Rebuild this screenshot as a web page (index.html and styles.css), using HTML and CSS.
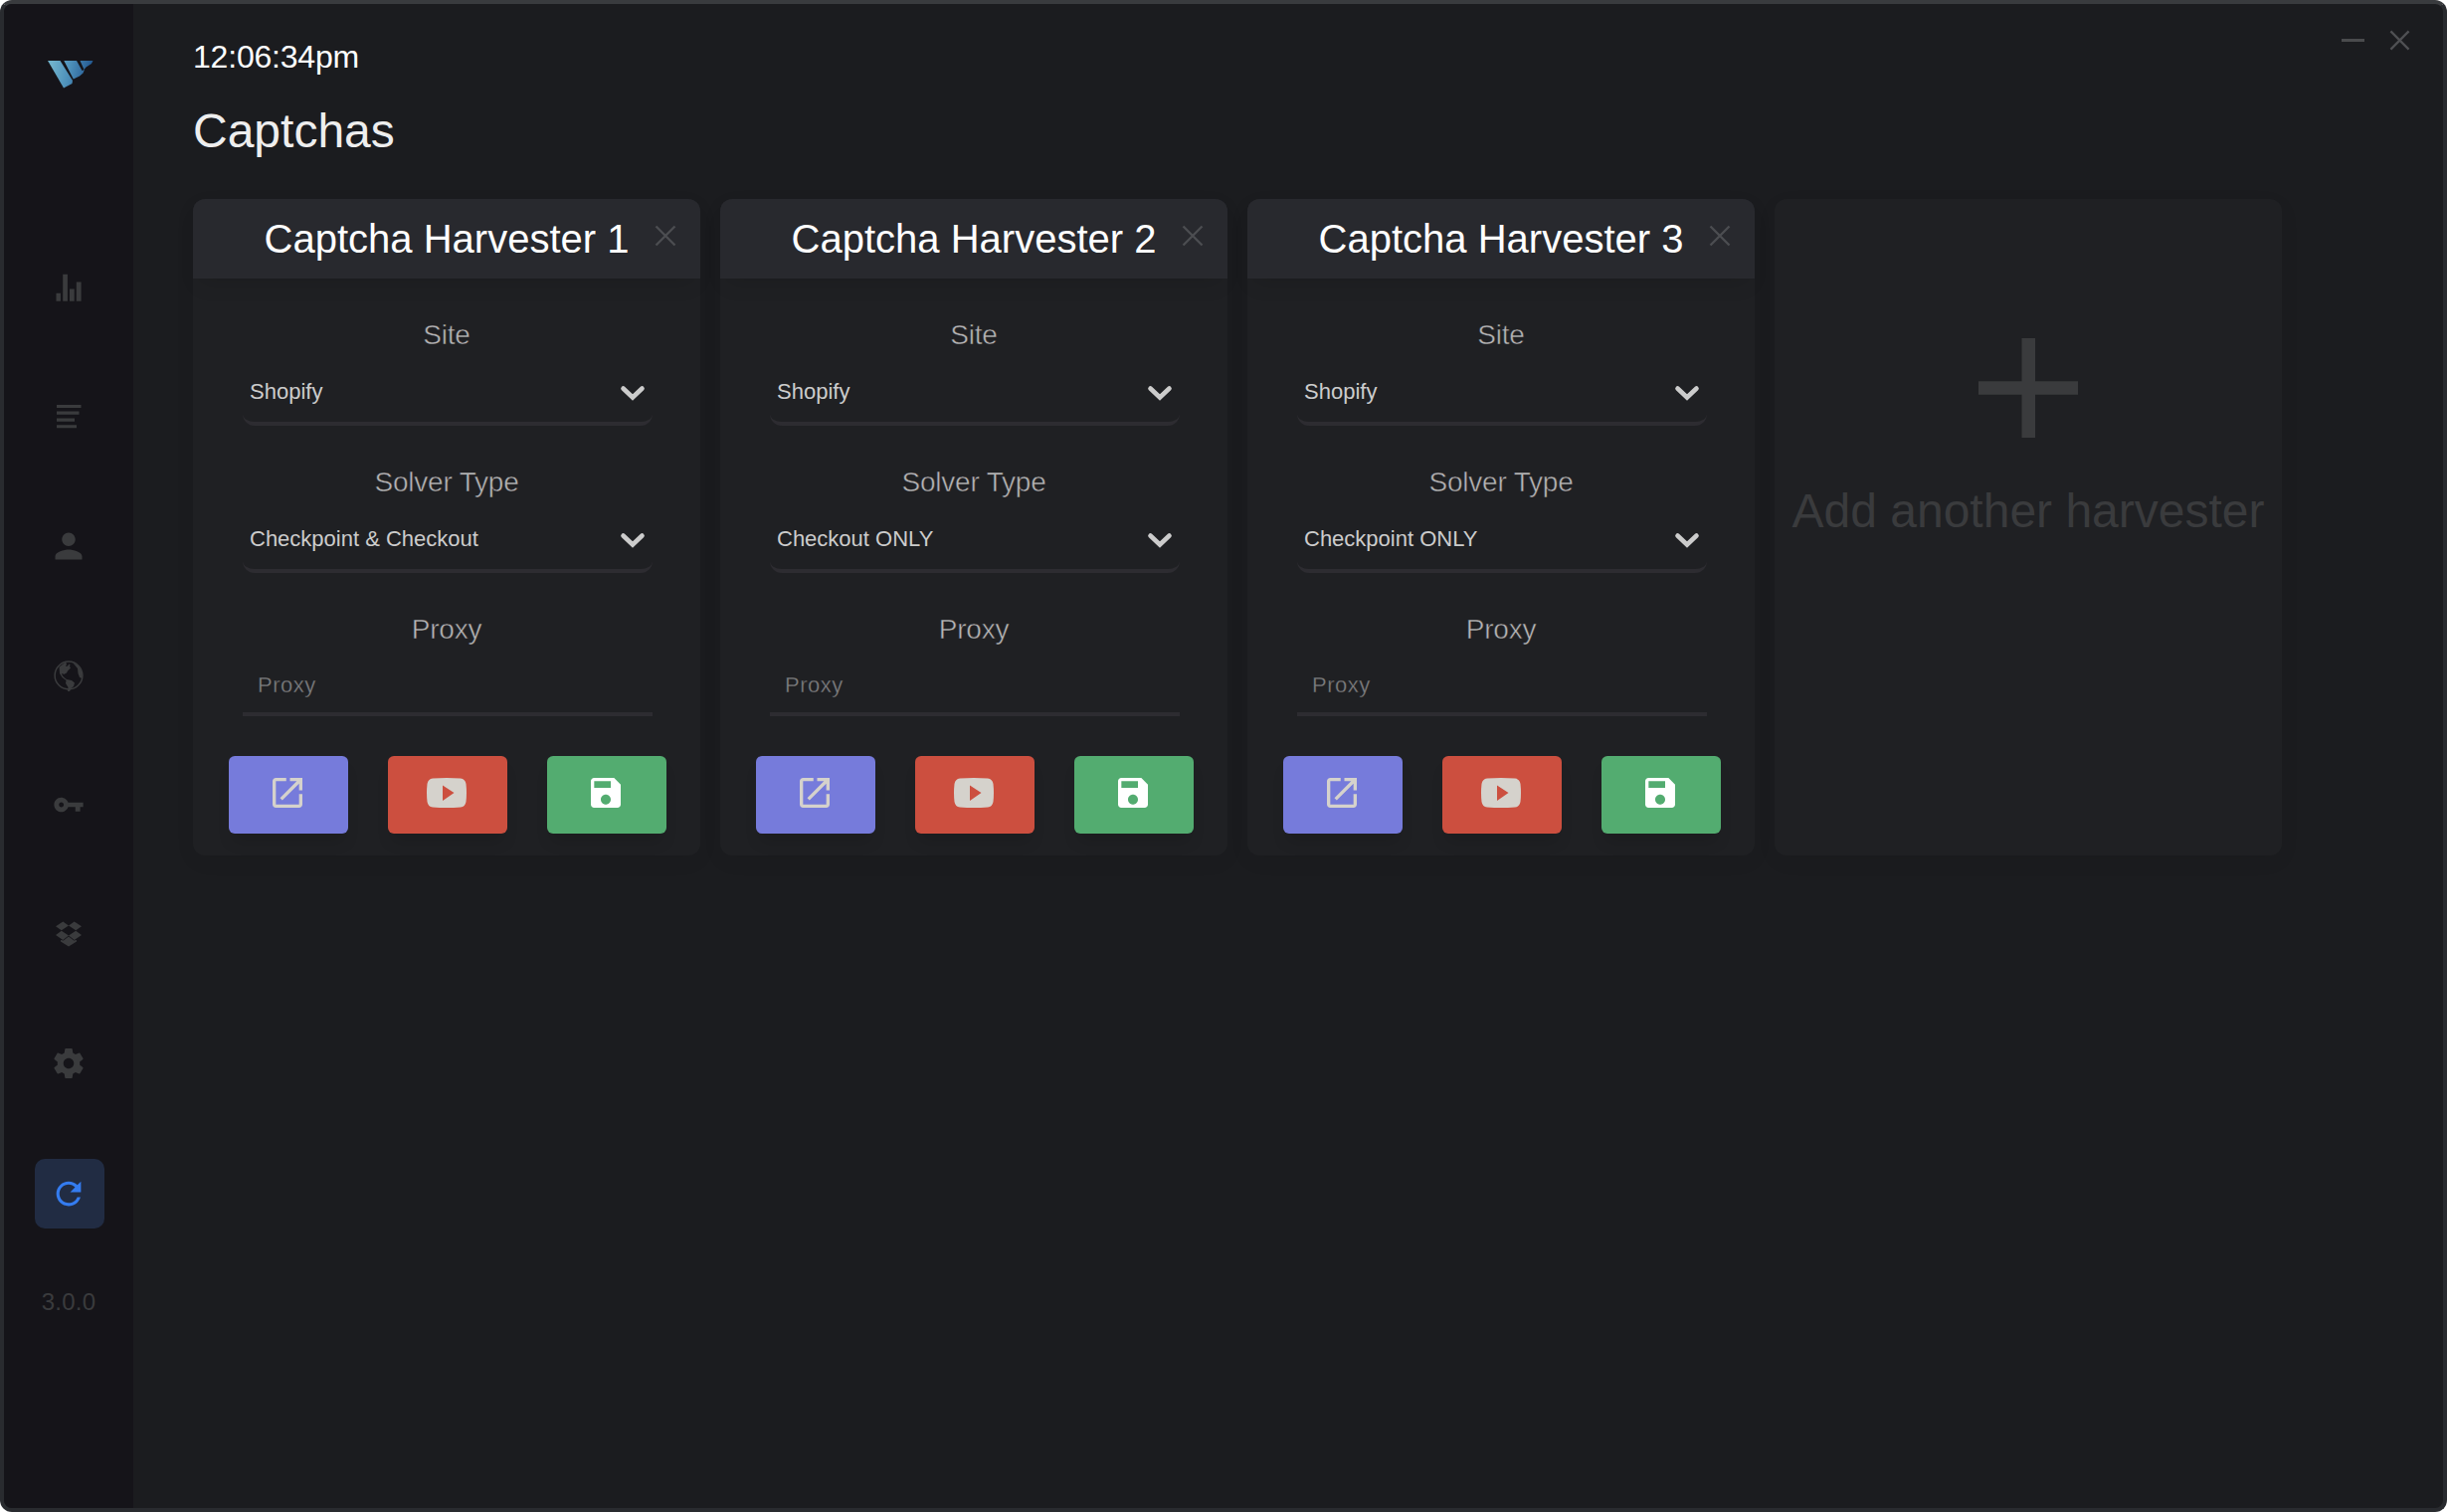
FILE: index.html
```html
<!DOCTYPE html>
<html lang="en">
<head>
<meta charset="utf-8">
<title>Captchas</title>
<link rel="stylesheet" href="styles.css">
</head>
<body>
<svg class="defs" aria-hidden="true">
  <symbol id="i-x" viewBox="0 0 22 22"><path d="M1.5 1.5l19 19M20.5 1.5l-19 19" fill="none" stroke="currentColor" stroke-width="2.4"/></symbol>
  <symbol id="i-chevron" viewBox="0 0 26 16"><path d="M3.5 3.5L13 12.5l9.500-9" fill="none" stroke="currentColor" stroke-width="4.600" stroke-linecap="round"/></symbol>
  <symbol id="i-open" viewBox="0 0 512 512"><path fill="currentColor" d="M405.340 405.332H106.660V106.668H240V64H106.660C83.191 64 64 83.197 64 106.668v298.664C64 428.803 83.191 448 106.660 448h298.680c23.469 0 42.660-19.197 42.660-42.668V272h-42.660v133.332zM288 64v42.668h87.474L159.999 322.133l29.866 29.866 215.476-215.470V224H448V64H288z"/></symbol>
  <symbol id="i-youtube" viewBox="0 0 40 30"><path fill="currentColor" fill-rule="evenodd" d="M6 .5Q20-.5 34 .5Q38.600 1 39.500 6Q40.500 15 39.500 24Q38.600 29 34 29.500Q20 30.500 6 29.500Q1.400 29 .5 24Q-.5 15 .5 6Q1.400 1 6 .5zM16 7.500v15.500L27.500 15z"/></symbol>
  <symbol id="i-save" viewBox="0 0 512 512"><path fill="currentColor" fill-rule="evenodd" d="M362.700 64h-256C83 64 64 83.200 64 106.700v298.700c0 23.500 19 42.700 42.700 42.700h298.700c23.500 0 42.700-19.200 42.700-42.700v-256L362.700 64zM256 405.300c-35.400 0-64-28.600-64-64s28.600-64 64-64 64 28.600 64 64-28.600 64-64 64zM320 192H106.700v-85.300H320V192z"/></symbol>
</svg>
<div class="window">
  <nav class="sidebar">
    <svg class="logo" viewBox="0 0 46 28">
      <defs><linearGradient id="g" x1="4" y1="4" x2="44" y2="12" gradientUnits="userSpaceOnUse"><stop offset="0" stop-color="#70b2cb"/><stop offset=".45" stop-color="#4d90ba"/><stop offset="1" stop-color="#22568f"/></linearGradient></defs>
      <path fill="url(#g)" d="M0 0H12.500L25 20 24.500 23 16 27.500z"/>
      <path fill="url(#g)" d="M16.300 0H29L34.500 10 37 9 35.500 12.500 32 15.500 25.800 18.500z"/>
      <path fill="url(#g)" d="M32.500 0H45.500L44 3 38.500 6.500 36.500 9z"/>
    </svg>
    <svg class="nav" viewBox="0 0 36 36"><path d="M5.500 23.700h4.400v8H5.500zM12.200 4.700h4.700v27h-4.700zM19 19.500h4.700v12.200H19zM25.800 12.500h4.800v19.200h-4.800z"/></svg>
    <svg class="nav" viewBox="0 0 36 36"><path d="M6 6h24.500v3H6zM6 12.600h22.500v3.200H6zM6 19.500h18v3.200H6zM6 26.300h20v3H6z"/></svg>
    <svg class="nav" viewBox="0 0 512 512"><path d="M256 256c52.805 0 96-43.201 96-96s-43.195-96-96-96-96 43.201-96 96 43.195 96 96 96zm0 48c-63.598 0-192 32.402-192 96v48h384v-48c0-63.598-128.402-96-192-96z"/></svg>
    <svg class="nav" viewBox="0 0 36 36"><circle cx="18" cy="18" r="13.900" fill="none" stroke="currentColor" stroke-width="1.500"/><path d="M8.500 9.500L15 4.500l1 2-1 2.500 2-.5 1.500-2 1 .5-.5 2 1 1.500-3 3-1 2-3 1.500-1-1-1 .5 1 2 2 2 2 1.500 5 1 3 2.500-1 3.500-2.500 2-1.500 3h-2l.5-4-2.500-4 .5-3-4-3-2.500-4zM22 5l6 3.500 3.500 6V21l-2.500-1-1.500-4-.5-5z"/></svg>
    <svg class="nav" viewBox="0 0 512 512"><path d="M249.200 224c-14.200-40.200-55.100-72-100.200-72-57.200 0-101 46.800-101 104s45.800 104 103 104c45.100 0 84.100-31.800 98.200-72H352v64h69.100v-64H464v-64H249.200zm-97.600 66.500c-19 0-34.500-15.500-34.500-34.500s15.500-34.500 34.500-34.500 34.500 15.500 34.500 34.500-15.500 34.500-34.500 34.500z"/></svg>
    <svg class="nav" viewBox="0 0 36 36"><path d="M12.300 5.500L18 9.500 10.800 14.300 5 10.300zM23.700 5.500L31 10.300 25.200 14.300 18 9.500zM10.800 14.700L18 19.600 12.300 24 5 19zM25.200 14.700L31 19 23.700 24 18 19.600zM18 20.600l5.200 4L26 24V25.500L18 30.500 10 25.500V24L12.800 24.600z"/></svg>
    <svg class="nav" viewBox="0 0 24 24"><path d="M19.430 12.980c.04-.32.070-.64.070-.98s-.03-.66-.07-.98l2.110-1.650c.19-.15.240-.42.120-.64l-2-3.460c-.12-.22-.39-.3-.61-.22l-2.490 1c-.52-.4-1.080-.73-1.690-.98l-.38-2.650C14.460 2.180 14.250 2 14 2h-4c-.25 0-.46.180-.49.420l-.38 2.650c-.61.250-1.170.59-1.690.98l-2.490-1c-.23-.09-.49 0-.61.220l-2 3.460c-.13.220-.07.490.12.640l2.110 1.650c-.04.320-.07.650-.07.980s.03.660.070.980l-2.110 1.650c-.19.150-.24.420-.12.640l2 3.460c.12.220.39.300.61.220l2.490-1c.52.400 1.080.73 1.690.98l.38 2.650c.03.240.240.420.49.420h4c.25 0 .46-.18.490-.42l.38-2.650c.61-.25 1.170-.59 1.690-.98l2.490 1c.23.090.49 0 .61-.22l2-3.460c.12-.22.070-.49-.12-.64l-2.110-1.650zM12 15.500c-1.930 0-3.500-1.570-3.500-3.500s1.570-3.500 3.500-3.500 3.500 1.570 3.500 3.500-1.570 3.500-3.500 3.500z"/></svg>
    <div class="active"><svg class="nav" viewBox="0 0 512 512"><path d="M256 388c-72.597 0-132-59.405-132-132 0-72.601 59.403-132 132-132 36.300 0 69.299 15.400 92.406 39.601L278 234h154V80l-51.698 51.702C348.406 99.798 304.406 80 256 80c-96.797 0-176 79.203-176 176s78.094 176 176 176c81.045 0 148.287-54.134 169.401-128H378.850c-18.745 49.561-67.138 84-122.850 84z"/></svg></div>
    <span class="version">3.0.0</span>
  </nav>
  <main class="main">
    <header class="top">
      <div class="clock">12:06:34pm</div>
      <div class="controls"><i class="minimize"></i><svg class="x" viewBox="0 0 22 22"><use href="#i-x"/></svg></div>
    </header>
    <h1 class="title">Captchas</h1>
    <div class="cards">
      <section class="card">
        <div class="card-head"><h2>Captcha Harvester 1</h2><svg class="x"><use href="#i-x"/></svg></div>
        <div class="label">Site</div><div class="select"><span>Shopify</span><svg class="chevron"><use href="#i-chevron"/></svg></div>
        <div class="label">Solver Type</div><div class="select"><span>Checkpoint &amp; Checkout</span><svg class="chevron"><use href="#i-chevron"/></svg></div>
        <div class="label">Proxy</div><div class="input">Proxy</div>
        <div class="buttons"><div class="btn open"><svg><use href="#i-open"/></svg></div><div class="btn youtube"><svg><use href="#i-youtube"/></svg></div><div class="btn save"><svg><use href="#i-save"/></svg></div></div>
      </section>
      <section class="card">
        <div class="card-head"><h2>Captcha Harvester 2</h2><svg class="x"><use href="#i-x"/></svg></div>
        <div class="label">Site</div><div class="select"><span>Shopify</span><svg class="chevron"><use href="#i-chevron"/></svg></div>
        <div class="label">Solver Type</div><div class="select"><span>Checkout ONLY</span><svg class="chevron"><use href="#i-chevron"/></svg></div>
        <div class="label">Proxy</div><div class="input">Proxy</div>
        <div class="buttons"><div class="btn open"><svg><use href="#i-open"/></svg></div><div class="btn youtube"><svg><use href="#i-youtube"/></svg></div><div class="btn save"><svg><use href="#i-save"/></svg></div></div>
      </section>
      <section class="card">
        <div class="card-head"><h2>Captcha Harvester 3</h2><svg class="x"><use href="#i-x"/></svg></div>
        <div class="label">Site</div><div class="select"><span>Shopify</span><svg class="chevron"><use href="#i-chevron"/></svg></div>
        <div class="label">Solver Type</div><div class="select"><span>Checkpoint ONLY</span><svg class="chevron"><use href="#i-chevron"/></svg></div>
        <div class="label">Proxy</div><div class="input">Proxy</div>
        <div class="buttons"><div class="btn open"><svg><use href="#i-open"/></svg></div><div class="btn youtube"><svg><use href="#i-youtube"/></svg></div><div class="btn save"><svg><use href="#i-save"/></svg></div></div>
      </section>
      <section class="card add">
        <svg class="plus" viewBox="0 0 100 100"><path d="M43.500 0h13.500v43.300H100v13.500H57V100H43.500V56.800H0V43.300h43.500z"/></svg>
        <div>Add another harvester</div>
      </section>
    </div>
  </main>
</div>
</body>
</html>
```

FILE: styles.css
```css
* { box-sizing: border-box; margin: 0; }
body { background: #fff; font-family: "Liberation Sans", Arial, sans-serif; color: #fff; }
svg { display: block; flex: none; }
.defs { display: none; }
.window { display: flex; width: 2460px; height: 1520px; border: 4px solid #292b2f; border-top-color: #393b3e; border-radius: 12px; background: #1b1c1f; overflow: hidden; }
.sidebar { width: 130px; background: #151419; color: #3a3b3d; display: flex; flex-direction: column; align-items: center; padding-top: 57px; }
.logo { width: 46px; height: 28px; margin: 0 0 182px 3px; }
.nav { width: 36px; height: 36px; margin-bottom: 94px; fill: currentColor; }
.active { width: 70px; height: 70px; margin-top: -16px; margin-left: 2px; border-radius: 10px; background: #212c43; color: #347cf0; display: flex; align-items: center; justify-content: center; }
.active .nav { margin: 0 2px 1px 0; }
.version { margin-top: 60px; font-size: 24px; line-height: 28px; letter-spacing: .2px; }
.main { flex: 1; padding: 0 36px 0 60px; }
.top { display: flex; justify-content: space-between; height: 96px; }
.clock { font-size: 32px; line-height: 36px; padding-top: 35px; letter-spacing: -.2px; }
.controls { display: flex; gap: 25px; padding-top: 26px; color: #4f5053; }
.minimize { width: 23px; height: 3px; margin-top: 9px; background: #4a4b4d; }
.x { width: 22px; height: 22px; }
.controls .x { width: 21px; height: 21px; margin-right: -3px; }
.title { font-size: 48px; line-height: 54px; font-weight: 400; color: #eee; margin-top: 5px; margin-bottom: 41px; }
.cards { display: flex; gap: 20px; }
.card { width: 510px; height: 660px; border-radius: 12px; background: #1f2023; box-shadow: 0 6px 20px rgba(0,0,0,.06); display: flex; flex-direction: column; align-items: center; }
.card-head { width: 100%; height: 80px; border-radius: 12px 12px 0 0; background: #28292e; box-shadow: 0 12px 20px -6px rgba(0,0,0,.1); display: grid; grid-template-columns: 48px 1fr 48px; margin-bottom: 41px; }
.card-head h2 { grid-column: 2; font-size: 40px; line-height: 46px; font-weight: 400; text-align: center; padding-top: 17px; white-space: nowrap; }
.card-head .x { margin: 26px 0 0 2px; color: #4c4d51; }
.label { font-size: 28px; line-height: 32px; height: 32px; color: #b4b4b5; letter-spacing: -.2px; -webkit-text-stroke: .5px #1f2023; }
.select { width: 412px; height: 75px; border-bottom: 4px solid #2d2c31; border-radius: 12px; margin: 0 0 41px 2px; padding: 11px 7px 0; display: flex; align-items: center; justify-content: space-between; font-size: 22px; color: #ccc; }
.chevron { width: 26px; height: 16px; margin-top: 1px; }
.input { width: 412px; height: 71px; border-bottom: 4px solid #2d2c31; margin-left: 2px; padding: 0 15px; font-size: 22px; line-height: 79px; letter-spacing: .5px; color: #7c7d7f; -webkit-text-stroke: .3px #1f2023; }
.buttons { display: flex; gap: 40px; margin-top: 40px; margin-left: 2px; }
.btn { width: 120px; height: 78px; border-radius: 6px; display: flex; align-items: center; justify-content: center; padding: 0 2px 4px 0; color: #d5d2cc; box-shadow: 0 12px 16px -4px rgba(0,0,0,.12); }
.btn svg { width: 40px; height: 40px; }
.btn.youtube svg { height: 30px; }
.open { background: #767bdb; }
.youtube { background: #cc4f3f; }
.save { background: #53ac70; color: #fff; }
.add { color: #3a3b3d; font-size: 48px; line-height: 54px; padding-top: 140px; white-space: nowrap; }
.plus { width: 100px; height: 100px; fill: currentColor; margin-bottom: 47px; }
```
